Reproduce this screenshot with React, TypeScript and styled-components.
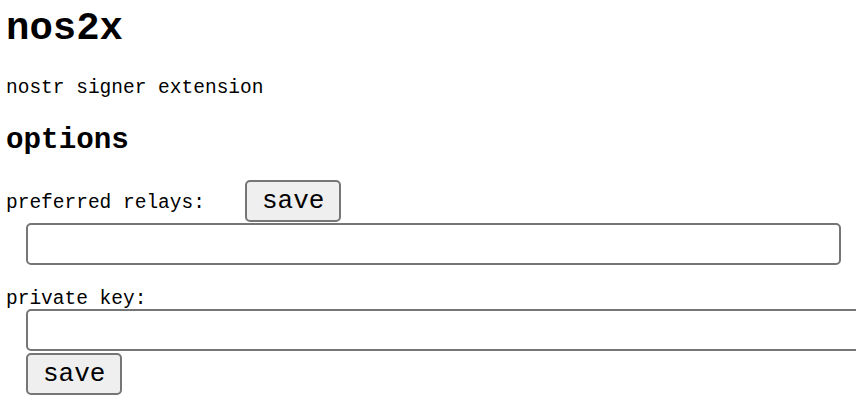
import React from "react";
import styled, { createGlobalStyle } from "styled-components";

const Global = createGlobalStyle`
  html, body { overflow: hidden; }
  body {
    margin: 0;
    background: #ffffff;
    color: #000000;
    font-family: "Liberation Mono", "Courier New", monospace;
    font-size: 19.5px;
  }
`;

const Page = styled.div`
  box-sizing: border-box;
  width: 100vw;
  padding: 7px 0 0 6px;
  overflow: hidden;
`;

const Title = styled.h1`
  margin: 0;
  font-size: 39px;
  line-height: 44px;
  font-weight: bold;
`;

const Subtitle = styled.p`
  margin: 26px 0 0;
  line-height: 22px;
`;

const Heading = styled.h2`
  margin: 25px 0 0;
  font-size: 29.25px;
  line-height: 33px;
  font-weight: bold;
`;

const Section = styled.div`
  margin-top: 23px;
  display: flex;
  flex-direction: column;
`;

const LabelRow = styled.div`
  display: flex;
  align-items: baseline;
  line-height: 22px;
`;

const Indent = styled.div<{ $top?: number }>`
  margin: ${(p) => p.$top ?? 0}px 0 0 20px;
  display: flex;
  flex-direction: column;
  align-items: flex-start;
  gap: 2px;
`;

const Button = styled.button<{ $offset?: number }>`
  margin-left: ${(p) => p.$offset ?? 0}px;
  height: 42px;
  padding: 0 15px;
  font-family: "Liberation Mono", "Courier New", monospace;
  font-size: 26px;
  line-height: 30px;
  color: #000;
  background: #efefef;
  border: 2px solid #767676;
  border-radius: 5px;
`;

const TextInput = styled.input<{ $width: number }>`
  box-sizing: border-box;
  width: ${(p) => p.$width}px;
  height: 42px;
  margin: 0;
  padding: 0 6px;
  font-family: "Liberation Mono", "Courier New", monospace;
  font-size: 19.5px;
  background: #fff;
  border: 2px solid #767676;
  border-radius: 5px;
  flex-shrink: 0;
`;

const KeyLabel = styled.label`
  margin-top: 24px;
  display: flex;
  flex-direction: column;
`;

const KeyText = styled.div`
  line-height: 20px;
`;

export default function App() {
  return (
    <Page>
      <Global />
      <Title>nos2x</Title>
      <Subtitle>nostr signer extension</Subtitle>
      <Heading>options</Heading>
      <Section>
        <LabelRow>
          <span>preferred relays:</span>
          <Button $offset={40}>save</Button>
        </LabelRow>
        <Indent $top={1}>
          <TextInput $width={815} />
        </Indent>
      </Section>
      <KeyLabel>
        <KeyText>private key:</KeyText>
        <Indent>
          <TextInput $width={900} />
          <Button>save</Button>
        </Indent>
      </KeyLabel>
    </Page>
  );
}
